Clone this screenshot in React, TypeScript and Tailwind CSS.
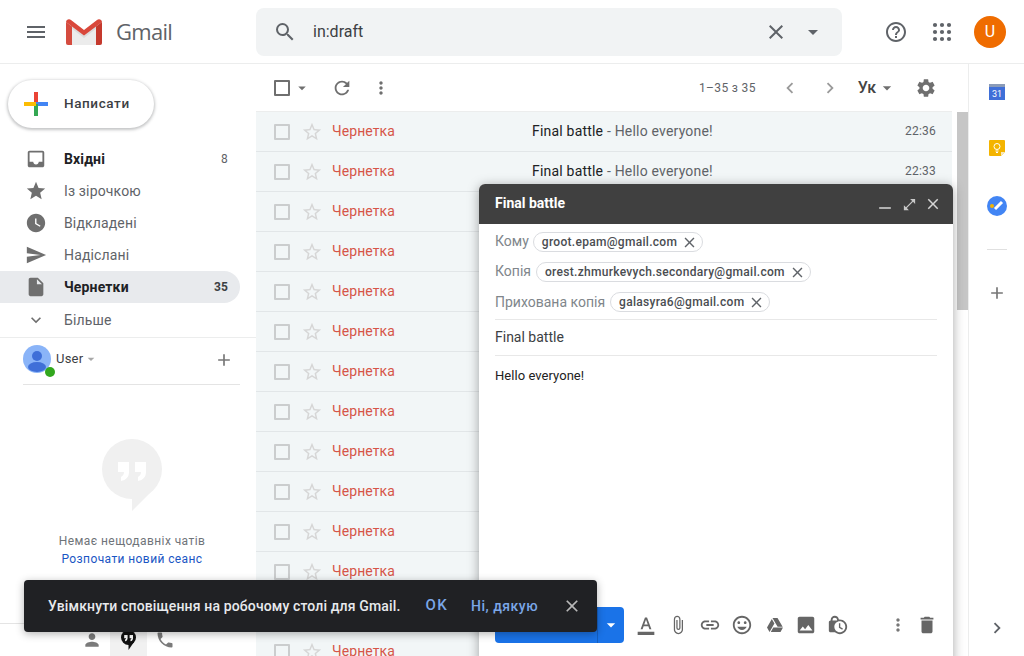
import React from "react";
import {
  MdMenu, MdSearch, MdClose, MdArrowDropDown, MdHelpOutline, MdRefresh, MdMoreVert,
  MdChevronLeft, MdChevronRight, MdSettings, MdStarBorder, MdInbox, MdStar, MdWatchLater, MdSend,
  MdInsertDriveFile, MdExpandMore, MdAdd, MdPerson, MdPhone, MdFormatColorText, MdAttachFile, MdLink,
  MdInsertEmoticon, MdImage, MdDelete, MdLockClock, MdOpenInFull, MdRemove,
} from "react-icons/md";
import { FaGoogleDrive } from "react-icons/fa";

const nav = [
  { label: "Вхідні", Icon: MdInbox, count: "8", bold: true },
  { label: "Із зірочкою", Icon: MdStar },
  { label: "Відкладені", Icon: MdWatchLater },
  { label: "Надіслані", Icon: MdSend },
  { label: "Чернетки", Icon: MdInsertDriveFile, count: "35", bold: true, active: true },
  { label: "Більше", Icon: MdExpandMore, small: true },
];

const times = ["22:36", "22:33", "", "", "", "", "", "", "", "", "", "", "", ""];

function GmailLogo() {
  return (
    <svg width="36" height="26" viewBox="0 0 36 26">
      <path d="M2 0 L18 12 L34 0 L36 2 V24 a2 2 0 0 1-2 2 H2 a2 2 0 0 1-2-2 V2 Z" fill="#ececec" />
      <path d="M5 6 L18 16 L31 6 V9 L18 19 L5 9 Z" fill="#dcdcdc" />
      <path d="M0 3 a3 3 0 0 1 5-2 L18 11 L31 1 a3 3 0 0 1 5 2 L18 16.5 Z" fill="#d9483b" />
      <path d="M0 3 L6 7.5 V26 H2 a2 2 0 0 1-2-2 Z" fill="#d54c3f" />
      <path d="M36 3 L30 7.5 V26 H34 a2 2 0 0 0 2-2 Z" fill="#c5392d" />
    </svg>
  );
}

function ComposePlus() {
  return (
    <svg width="24" height="24" viewBox="0 0 24 24">
      <rect x="10" y="0" width="4" height="12" fill="#ea4335" />
      <rect x="12" y="10" width="12" height="4" fill="#4285f4" />
      <rect x="10" y="12" width="4" height="12" fill="#34a853" />
      <rect x="0" y="10" width="12" height="4" fill="#fbbc04" />
    </svg>
  );
}

function AppsDots() {
  const pos = [5, 12, 19];
  return (
    <svg width="24" height="24" viewBox="0 0 24 24" className="ml-[22px]">
      {pos.map((y) => pos.map((x) => <circle key={`${x}-${y}`} cx={x} cy={y} r="2.1" fill="#5f6368" />))}
    </svg>
  );
}

function Chip({ text }: { text: string }) {
  return (
    <span className="flex items-center h-5 pl-[8px] pr-[4px] gap-[4px] rounded-full border border-[#dadce0] text-xs font-medium tracking-[0.3px] text-[#4a4d51]">
      {text}
      <MdClose size={17} className="text-[#5f6368]" />
    </span>
  );
}

function Row({ time }: { time: string }) {
  return (
    <div className="flex items-center h-10 shrink-0 bg-[#f2f6f7] border-b border-[#e2e6e8] text-sm">
      <div className="w-4 h-4 ml-[18px] border-2 border-[#cbcdce] rounded-[1px]" />
      <MdStarBorder size={22} className="ml-[11px] text-[#d6d6d6]" />
      <span className="ml-[9px] w-[200px] pb-[2px] tracking-[0.1px] text-[#d65548]">Чернетка</span>
      <span className="flex-1 pb-[2px] tracking-[0.2px] text-[#5f6368]">
        <span className="text-[#202124]">Final battle</span> - Hello everyone!
      </span>
      <span className="mr-4 pb-[2px] text-xs text-[#5f6368] tracking-[0.2px]">{time}</span>
    </div>
  );
}

export default function App() {
  return (
    <div className="relative w-full h-[656px] overflow-hidden bg-white font-['Roboto',sans-serif] text-[#202124]">
      {/* Header */}
      <header className="flex items-center h-16 border-b border-[#eceded]">
        <div className="flex items-center w-[256px] pl-6">
          <MdMenu size={24} className="text-[#5f6368]" />
          <div className="ml-[18px]"><GmailLogo /></div>
          <span className="ml-[14px] text-[22px] text-[#5f6368] font-['Open_Sans',sans-serif] tracking-[-0.7px]">Gmail</span>
        </div>
        <div className="flex items-center w-[586px] h-12 rounded-lg bg-[#f1f3f4]">
          <MdSearch size={24} className="ml-[17px] text-[#5f6368]" />
          <span className="ml-[16px] flex-1 text-base text-[#3c4043]">in:draft</span>
          <MdClose size={24} className="text-[#5f6368]" />
          <MdArrowDropDown size={24} className="ml-[13px] mr-[17px] text-[#5f6368]" />
        </div>
        <MdHelpOutline size={24} className="ml-[42px] text-[#5f6368]" />
        <AppsDots />
        <div className="ml-[20px] flex items-center justify-center w-8 h-8 rounded-full bg-[#ef6c00] text-white text-base">U</div>
      </header>

      <div className="flex h-[592px]">
        {/* Sidebar */}
        <aside className="relative flex flex-col w-[256px] shrink-0">
          <div className="flex items-center ml-2 mt-4 w-[146px] h-12 rounded-full bg-white shadow-[0_1px_3px_1px_rgba(60,64,67,0.3)]">
            <div className="ml-4"><ComposePlus /></div>
            <span className="ml-4 pb-[1px] text-[13.5px] font-medium tracking-[0.6px] text-[#3c4043]">Написати</span>
          </div>
          <nav className="mt-[15px] flex flex-col">
            {nav.map(({ label, Icon, count, bold, active, small }) => (
              <div key={label} className={`flex items-center h-8 w-[240px] pr-3 rounded-r-full text-sm tracking-[0.15px] ${small ? "mt-[1px]" : ""} ${active ? "bg-[#e8eaed]" : ""} ${bold ? "font-bold text-[#202124]" : "text-[#5f6368]"}`}>
                <div className="flex justify-center w-[72px] pr-[1px]">
                  <Icon size={small ? 20 : 22} className="text-[#6f6f6f]" />
                </div>
                <span className="flex-1 -ml-2">{label}</span>
                {count && <span className={`text-xs ${active ? "font-bold text-[#3c4043]" : "font-normal text-[#5f6368]"}`}>{count}</span>}
              </div>
            ))}
          </nav>
          <div className="mt-[1px] border-b border-[#eceded]" />
          <div className="flex items-start ml-[23px] mr-4 h-[47px] pt-[7px] border-b border-[#e4e4e4]">
            <div className="relative w-7 h-7 rounded-full bg-[#8ab4f8] overflow-visible">
              <svg width="28" height="28" viewBox="0 0 28 28">
                <circle cx="14" cy="11" r="5" fill="#3f6fd8" />
                <ellipse cx="14" cy="22" rx="9" ry="5" fill="#3f6fd8" />
              </svg>
              <span className="absolute right-[-4px] bottom-[-4px] w-[10px] h-[10px] rounded-full bg-[#32a71d]" />
            </div>
            <span className="ml-[5px] mt-[4px] text-[13px] tracking-[0.2px] text-[#3c4043] leading-[20px]">User</span>
            <MdArrowDropDown size={16} className="mt-[6px] text-[#a8a8a8]" />
            <MdAdd size={20} className="ml-auto mt-[5px] mr-[6px] text-[#777]" />
          </div>
          <div className="flex flex-col items-center w-[256px] ml-1 mt-[54px]">
            <svg width="60" height="72" viewBox="0 0 60 72">
              <circle cx="30" cy="30" r="30" fill="#f0f0f0" />
              <path d="M30 55 V72 L50 52 Z" fill="#f0f0f0" />
              <path d="M16 23 h11 v10 c0 5-3 8-8 9 v-4 c2-1 3-3 3-5 h-6 Z M33 23 h11 v10 c0 5-3 8-8 9 v-4 c2-1 3-3 3-5 h-6 Z" fill="#fff" />
            </svg>
            <span className="mt-[22px] text-xs tracking-[0.42px] text-[#6f7479]">Немає нещодавніх чатів</span>
            <span className="mt-[2px] text-xs tracking-[0.4px] text-[#1a56c4]">Розпочати новий сеанс</span>
          </div>
          <div className="absolute left-0 right-0 bottom-0 h-[33px] flex justify-center border-t border-[#e4e4e4]">
            <div className="flex items-center">
              <MdPerson size={20} className="text-[#7a7a7a] mr-[8px]" />
              <div className="flex items-center justify-center w-[37px] h-8 bg-[#f1f1f1]">
                <svg width="15" height="20" viewBox="0 0 15 20">
                  <circle cx="7.5" cy="7.5" r="7.5" fill="#111" />
                  <path d="M7.5 13 V20 L13 12 Z" fill="#111" />
                  <path d="M3.2 5 h3.4 v3 c0 2-1 3-2.5 3.2 v-1.7 c.6-.2 1-.6 1-1.3 h-1.9 Z M8.6 5 h3.4 v3 c0 2-1 3-2.5 3.2 v-1.7 c.6-.2 1-.6 1-1.3 h-1.9 Z" fill="#fff" />
                </svg>
              </div>
              <MdPhone size={20} className="ml-2 text-[#7a7a7a]" />
            </div>
          </div>
        </aside>

        {/* Main */}
        <main className="flex flex-col w-[696px] shrink-0">
          <div className="flex items-center h-12 shrink-0 border-b border-[#eceded]">
            <div className="w-4 h-4 ml-[18px] border-2 border-[#6f6f6f] rounded-[1px]" />
            <MdArrowDropDown size={18} className="ml-[3px] text-[#6f6f6f]" />
            <MdRefresh size={22} className="ml-[20px] text-[#6f6f6f]" />
            <MdMoreVert size={20} className="ml-[18px] text-[#6f6f6f]" />
            <span className="ml-auto text-xs tracking-[0.35px] text-[#5f6368]">1–35 з 35</span>
            <MdChevronLeft size={22} className="ml-[23px] text-[#9a9a9a]" />
            <MdChevronRight size={22} className="ml-[18px] text-[#9a9a9a]" />
            <span className="ml-[17px] text-base font-medium text-[#444]">Ук</span>
            <MdArrowDropDown size={20} className="ml-[1px] text-[#6f6f6f]" />
            <MdSettings size={22} className="ml-[18px] mr-[15px] text-[#6f6f6f]" />
          </div>
          <div className="flex flex-col">
            {times.map((t, i) => <Row key={i} time={t} />)}
          </div>
        </main>

        {/* Scrollbar */}
        <div className="flex flex-col w-[16px] shrink-0 pl-[5px] pt-[48px]">
          <div className="h-[198px] w-[11px] bg-[#c6c6c6]" />
        </div>

        {/* Right rail */}
        <aside className="relative flex-1 flex flex-col items-center border-l border-[#eceded]">
          <svg className="mt-[20px]" width="16" height="16" viewBox="0 0 16 16">
            <rect width="16" height="16" fill="#3f6fd8" />
            <rect width="16" height="3" fill="#8a9bb8" />
            <text x="8" y="13" fontSize="9" fill="#fff" textAnchor="middle" fontFamily="Roboto">31</text>
          </svg>
          <svg className="mt-[40px]" width="16" height="16" viewBox="0 0 16 16">
            <path d="M1 0 H15 a1 1 0 0 1 1 1 V12 L12 16 H1 a1 1 0 0 1-1-1 V1 a1 1 0 0 1 1-1 Z" fill="#f4b400" />
            <circle cx="8" cy="6.5" r="3" fill="none" stroke="#fff" strokeWidth="1" />
            <path d="M6.5 11 h3 M7 12.5 h2" stroke="#fff" strokeWidth="1" />
            <path d="M12 16 V12 H16 Z" fill="#f5e9c0" />
          </svg>
          <svg className="mt-[40px]" width="20" height="20" viewBox="0 0 20 20">
            <circle cx="10" cy="10" r="10" fill="#4285f4" />
            <path d="M8 13 L15 6" stroke="#fff" strokeWidth="3" />
            <circle cx="5" cy="10" r="2" fill="#f4b400" />
          </svg>
          <div className="mt-[33px] w-5 border-t border-[#e0e0e0]" />
          <MdAdd size={20} className="mt-[33px] text-[#777]" />
          <MdChevronRight size={22} className="absolute bottom-[17px] text-[#5f6368]" />
        </aside>
      </div>

      {/* Compose window */}
      <section className="absolute left-[479px] top-[184px] w-[474px] h-[480px] flex flex-col bg-white rounded-t-md shadow-[0_2px_12px_rgba(0,0,0,0.35)]">
        <div className="flex items-center h-10 shrink-0 pl-4 pr-[11px] rounded-t-md bg-[#404040] text-sm font-bold text-white">
          <span className="flex-1 pb-[2px]">Final battle</span>
          <MdRemove size={20} className="mt-2 text-[#c8c8c8]" />
          <MdOpenInFull size={15} className="ml-[7px] text-[#c8c8c8]" />
          <MdClose size={18} className="ml-[7px] text-[#d4d4d4]" />
        </div>
        <div className="flex flex-col mx-4 text-sm text-[#80868b]">
          <div className="flex flex-col gap-[10px] pt-[8px] pb-[7px] border-b border-[#e8e8e8]">
            <div className="flex items-center gap-[4px] h-5"><span className="pb-[2px]">Кому</span><Chip text="groot.epam@gmail.com" /></div>
            <div className="flex items-center gap-[5px] h-5"><span className="pb-[2px]">Копія</span><Chip text="orest.zhmurkevych.secondary@gmail.com" /></div>
            <div className="flex items-center gap-[5px] h-5"><span>Прихована копія</span><Chip text="galasyra6@gmail.com" /></div>
          </div>
          <div className="flex items-center h-9 pb-[1px] border-b border-[#e8e8e8] text-[#3c4043]">Final battle</div>
          <div className="mt-[11px] text-[13px] tracking-[0.05px] leading-[18px] text-[#222]">Hello everyone!</div>
        </div>
        <div className="absolute left-4 right-4 top-[423px] flex items-center h-9">
          <div className="w-[102px] h-9 rounded-l bg-[#1a73e8]" />
          <div className="flex items-center justify-center w-[27px] h-9 rounded-r bg-[#1a73e8] border-l border-[#155fc0]">
            <MdArrowDropDown size={20} className="text-white" />
          </div>
          <MdFormatColorText size={20} className="ml-[12px] text-[#666]" />
          <MdAttachFile size={20} className="ml-[12px] text-[#666]" />
          <MdLink size={22} className="ml-[11px] text-[#666]" />
          <MdInsertEmoticon size={22} className="ml-[10px] text-[#666]" />
          <FaGoogleDrive size={16} className="ml-[14px] text-[#666]" />
          <MdImage size={22} className="ml-[12px] text-[#666]" />
          <MdLockClock size={22} className="ml-[10px] text-[#666]" />
          <MdMoreVert size={20} className="ml-auto text-[#777]" />
          <MdDelete size={22} className="ml-[8px] mr-[-1px] text-[#666]" />
        </div>
      </section>

      {/* Snackbar */}
      <div className="absolute left-6 top-[580px] flex items-center w-[573px] h-[52px] rounded bg-[#202124] text-sm font-medium text-[#e8eaed] shadow-[0_2px_8px_rgba(0,0,0,0.3)]">
        <span className="ml-6 tracking-[0.14px]">Увімкнути сповіщення на робочому столі для Gmail.</span>
        <span className="ml-[25px] text-[15px] tracking-[1.4px] text-[#7ba7e8]">OK</span>
        <span className="ml-[23px] tracking-[0.5px] text-[#7ba7e8]">Ні, дякую</span>
        <MdClose size={20} className="ml-[24px] text-[#b8b8b8]" />
      </div>
    </div>
  );
}
